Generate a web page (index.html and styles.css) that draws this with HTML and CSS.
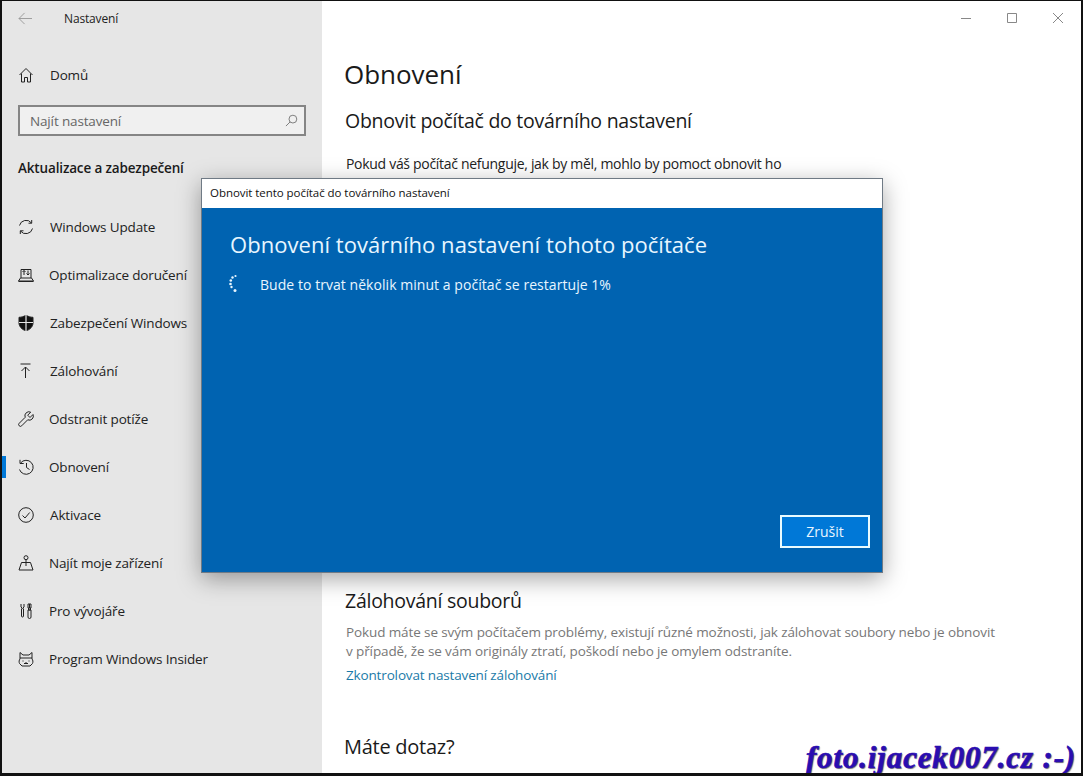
FILE: index.html
```html
<!DOCTYPE html>
<html lang="cs">
<head>
<meta charset="utf-8">
<title>Nastavení</title>
<link rel="stylesheet" href="styles.css">
</head>
<body>
<div class="window">
  <aside class="sidebar">
    <div class="titlebar">
      <svg class="back" viewBox="0 0 16 14"><path d="M7 1 1 7l6 6M1 7h14"/></svg>
      <span class="app-name">Nastavení</span>
    </div>
    <div class="home">
      <svg class="icon" viewBox="0 0 16 16"><path d="M1.500 8 8 1.500 14.500 8M3.500 6.500V15h3v-4.500h3V15h3V6.500"/></svg>
      <span>Domů</span>
    </div>
    <div class="search">
      <span>Najít nastavení</span>
      <svg class="search-icon" viewBox="0 0 14 14"><circle cx="8.500" cy="5.500" r="4.200"/><path d="M5.500 8.500 1 13"/></svg>
    </div>
    <div class="section">Aktualizace a zabezpečení</div>
    <nav class="nav">
      <div class="nav-item">
        <svg class="icon" viewBox="0 0 16 16"><path d="M1.500 6.500A6.800 6.800 0 0 1 13.500 4M14.500 9.500A6.800 6.800 0 0 1 2.500 12M13.700 1v3.200h-3.200M2.300 15v-3.200h3.200"/></svg>
        <span class="wide">Windows Update</span>
      </div>
      <div class="nav-item">
        <svg class="icon" viewBox="0 0 16 16"><path d="M3 11V2.500h10V11M.5 14 2.500 11h11l2 3zM.5 14.500h15M6 8V3.500M4.500 5 6 3.500 7.500 5M10 3.500V8M8.500 6.500 10 8l1.500-1.500"/></svg>
        <span>Optimalizace doručení</span>
      </div>
      <div class="nav-item">
        <svg class="icon solid" viewBox="0 0 16 16"><path d="M8 0C6 1.600 3.500 2.300 1 2.300V8c0 3.500 3 6.500 7 8 4-1.500 7-4.500 7-8V2.300C12.500 2.300 10 1.600 8 0z"/><path class="cut" d="M8 0v16M1 7.500h14"/></svg>
        <span class="wide">Zabezpečení Windows</span>
      </div>
      <div class="nav-item">
        <svg class="icon" viewBox="0 0 16 16"><path d="M2.500 1h10M7.500 15V4M3.500 8l4-4 4 4"/></svg>
        <span class="wide">Zálohování</span>
      </div>
      <div class="nav-item">
        <svg class="icon" viewBox="0 0 16 16"><path d="M15 3.500 12 6.500 9.700 4.200 12.700 1.200A4 4 0 0 0 7.200 6.300L1.200 12.300A1.700 1.700 0 0 0 3.700 14.800L9.700 8.800A4 4 0 0 0 15 3.500z"/></svg>
        <span>Odstranit potíže</span>
      </div>
      <div class="nav-item active">
        <svg class="icon" viewBox="0 0 16 16"><path d="M2.600 4A7 7 0 1 1 1.500 10.500M2 .8V4.500h3.700M8.500 4v4.500l3 2"/></svg>
        <span>Obnovení</span>
      </div>
      <div class="nav-item">
        <svg class="icon" viewBox="0 0 16 16"><circle cx="8" cy="8" r="7.300"/><path d="M4.500 8.500 7 11l4.700-5.500"/></svg>
        <span class="wide">Aktivace</span>
      </div>
      <div class="nav-item">
        <svg class="icon" viewBox="0 0 16 16"><circle cx="8" cy="2.700" r="2"/><path d="M8 4.700V11M3.500 7.500h9L15 15H1z"/></svg>
        <span>Najít moje zařízení</span>
      </div>
      <div class="nav-item">
        <svg class="icon" viewBox="0 0 16 16"><path d="M3 1v3l1.500 1.500L6 4V1M3.500 5.500V13a1 1 0 0 0 2 0V5.500M10 1h3v4h-3zM11.500 1v4M10.500 5v2h2V5M10 7h3v7a1.500 1.500 0 0 1-3 0z"/></svg>
        <span>Pro vývojáře</span>
      </div>
      <div class="nav-item">
        <svg class="icon" viewBox="0 0 16 16"><path d="M2 1.500 5 4h6l3-2.500V8c1 1 1.200 3 .5 4.500L12 15H4l-2.500-2.500C.8 11 1 9 2 8zM2 7h12M5 9.500v1M11 9.500v1M6 12.500h4M8 11v1.500"/></svg>
        <span>Program Windows Insider</span>
      </div>
    </nav>
  </aside>

  <main class="content">
    <div class="controls">
      <svg viewBox="0 0 12 12"><path d="M1 6.500h10"/></svg>
      <svg viewBox="0 0 12 12"><path d="M1.500 1.500h9v9h-9z"/></svg>
      <svg viewBox="0 0 12 12"><path d="M1 1l10 10M11 1 1 11"/></svg>
    </div>
    <h1>Obnovení</h1>
    <h2 class="first">Obnovit počítač do továrního nastavení</h2>
    <p class="lead">Pokud váš počítač nefunguje, jak by měl, mohlo by pomoct obnovit ho</p>
    <h2 class="backup">Zálohování souborů</h2>
    <p class="muted">Pokud máte se svým počítačem problémy, existují různé možnosti, jak zálohovat soubory nebo je obnovit<br>v případě, že se vám originály ztratí, poškodí nebo je omylem odstraníte.</p>
    <a class="link">Zkontrolovat nastavení zálohování</a>
    <h2 class="question">Máte dotaz?</h2>
  </main>

  <section class="dialog">
    <header class="dialog-title">Obnovit tento počítač do továrního nastavení</header>
    <div class="dialog-body">
      <h3>Obnovení továrního nastavení tohoto počítače</h3>
      <div class="progress">
        <svg class="spinner" viewBox="0 0 12 20"><circle cx="9.500" cy="2" r="1.100"/><circle cx="6.500" cy="3.500" r="1.200"/><circle cx="4.800" cy="6.500" r="1.300"/><circle cx="4.500" cy="10" r="1.300"/><circle cx="5.500" cy="13" r="1.200"/><circle cx="9" cy="16.500" r="1.500"/></svg>
        <span>Bude to trvat několik minut a počítač se restartuje 1%</span>
      </div>
      <div class="dialog-actions"><button class="cancel">Zrušit</button></div>
    </div>
  </section>

  <div class="watermark">foto.ijacek007.cz :-)</div>
</div>
</body>
</html>
```

FILE: styles.css
```css
* { box-sizing: border-box; }
html, body { margin: 0; height: 100%; overflow: hidden; background: #fff; }
body { font-family: "Open Sans", "Noto Sans", sans-serif; color: #1a1a1a; }

.window {
  position: relative;
  display: flex;
  width: 1083px;
  height: 776px;
  border: 2px solid #111;
  border-top-width: 1px;
  border-bottom-width: 3px;
  overflow: hidden;
}

.sidebar { width: 320px; flex: none; background: #e6e6e6; }
.titlebar { display: flex; align-items: center; height: 34px; padding-left: 16px; }
.back { width: 15px; height: 13px; fill: none; stroke: #999; stroke-width: 1; }
.app-name { margin-left: 31px; font-size: 12px; letter-spacing: -.15px; color: #222; }

.home, .nav-item { display: flex; align-items: center; font-size: 13.500px; letter-spacing: -.15px; color: #222; }
.home { height: 48px; margin-top: 16px; padding-left: 16px; }
.icon { width: 16px; height: 16px; margin-right: 15px; fill: none; stroke: #222; stroke-width: 1; flex: none; }
.icon.solid { fill: #111; }
.icon .cut { stroke: #e6e6e6; stroke-width: 1.200; fill: none; }
.wide { margin-left: 1px; }
.home span { margin-left: 1px; }

.search {
  display: flex;
  align-items: center;
  justify-content: space-between;
  width: 288px;
  height: 31px;
  margin: 6px 0 0 16px;
  padding: 0 6px 0 10px;
  background: #f0f0f0;
  border: 2px solid #858585;
  font-size: 13.500px;
  letter-spacing: -.15px;
  color: #666;
}
.search-icon { width: 13px; height: 13px; fill: none; stroke: #777; stroke-width: 1; }

.section { margin: 22px 0 0 16px; height: 20px; line-height: 20px; font-size: 13.500px; font-weight: 600; letter-spacing: -.15px; color: #1a1a1a; }

.nav { margin-top: 25px; }
.nav-item { position: relative; height: 48px; padding-left: 16px; }
.nav-item.active::before {
  content: "";
  position: absolute;
  left: 0;
  top: 13px;
  width: 4px;
  height: 22px;
  background: #0078d7;
}

.content { flex: 1; position: relative; padding-left: 23px; background: #fff; }
.controls { position: absolute; top: 11px; right: 0; display: flex; gap: 34px; padding-right: 17px; }
.controls svg { width: 12px; height: 12px; fill: none; stroke: #888; stroke-width: 1; }

h1 { margin: 53px 0 0 -1px; font-size: 26px; line-height: 40px; font-weight: 400; letter-spacing: -.05px; color: #1a1a1a; }
h2 { margin: 0; font-size: 19.500px; line-height: 26px; font-weight: 400; letter-spacing: -.26px; color: #1a1a1a; }
h2.first { margin-top: 14px; }
.lead { margin: 20px 0 0 1px; font-size: 14px; line-height: 20px; letter-spacing: -.3px; color: #222; }
h2.backup { margin-top: 414px; }
.muted { margin: 9px 0 0 1px; font-size: 13.500px; line-height: 19px; letter-spacing: -.11px; color: #777; }
.link { display: block; margin: 4px 0 0 1px; font-size: 13.500px; line-height: 20px; letter-spacing: -.15px; color: #1a7aa8; }
h2.question { margin: 49px 0 0 -1px; font-size: 20px; }

.dialog {
  position: absolute;
  left: 199px;
  top: 177px;
  width: 682px;
  height: 395px;
  display: flex;
  flex-direction: column;
  border: 1px solid #6f7a85;
  box-shadow: 0 6px 22px rgba(0, 0, 0, .35);
  background: #0063b1;
}
.dialog-title { height: 29px; flex: none; padding-left: 8px; background: #fff; font-size: 11.500px; line-height: 28px; letter-spacing: -.05px; color: #111; }
.dialog-body { flex: 1; display: flex; flex-direction: column; padding: 21px 12px 24px 28px; color: #fff; }
.dialog-body h3 { margin: 0; font-size: 22px; line-height: 30px; font-weight: 400; letter-spacing: .05px; color: #e8f6ff; }
.progress { display: flex; align-items: center; margin-top: 15px; font-size: 14px; letter-spacing: .05px; color: #e8f6ff; }
.spinner { width: 12px; height: 20px; margin-left: -4px; margin-right: 22px; fill: #e8f6ff; }
.dialog-actions { margin-top: auto; display: flex; justify-content: flex-end; }
.cancel {
  width: 90px;
  height: 33px;
  background: #0078d7;
  border: 2px solid #e8fbff;
  color: #e8f6ff;
  font: 14px "Open Sans", "Noto Sans", sans-serif;
}

.watermark {
  position: absolute;
  right: 5px;
  bottom: -2px;
  font-family: "Liberation Serif", serif;
  font-style: italic;
  font-weight: 700;
  font-size: 31px;
  line-height: 34px;
  letter-spacing: .85px;
  color: #2a0db0;
  -webkit-text-stroke: .7px #2a0db0;
  text-shadow: 1px 1px 1px #777;
}
```
